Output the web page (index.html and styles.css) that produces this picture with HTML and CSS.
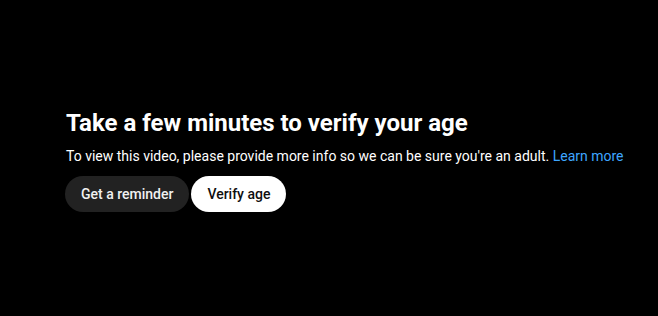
FILE: index.html
```html
<!DOCTYPE html>
<html>
<head>
<meta charset="utf-8">
<link rel="stylesheet" href="styles.css">
</head>
<body>
<main class="page">
  <section class="gate">
    <h1 class="title">Take a few minutes to verify your age</h1>
    <p class="desc">To view this video, please provide more info so we can be sure you're an adult. <a class="link" href="#">Learn more</a></p>
    <div class="actions">
      <button class="btn btn-dark">Get a reminder</button>
      <button class="btn btn-light">Verify age</button>
    </div>
  </section>
</main>
</body>
</html>
```
FILE: styles.css
```css
html, body {
  margin: 0;
  padding: 0;
  background: #000;
  height: 100%;
}
.page {
  font-family: Roboto, "Noto Sans", Arial, sans-serif;
  color: #fff;
  padding: 107px 0 0 66px;
}
.gate {
  display: flex;
  flex-direction: column;
}
.title {
  margin: 0;
  font-size: 24px;
  line-height: 32px;
  font-weight: 700;
}
.desc {
  margin: 7px 0 0 0;
  font-size: 14px;
  line-height: 20px;
  font-weight: 400;
}
.link {
  color: #3ea6ff;
  text-decoration: none;
}
.actions {
  display: flex;
  gap: 2px;
  margin-top: 10px;
  margin-left: -1px;
}
.btn {
  height: 36px;
  border: none;
  border-radius: 18px;
  padding: 0 16px;
  font-family: Roboto, "Noto Sans", Arial, sans-serif;
  font-size: 14px;
  font-weight: 500;
  cursor: pointer;
}
.btn-dark {
  background: #222;
  color: #f1f1f1;
}
.btn-light {
  background: #fff;
  color: #0f0f0f;
}
```
